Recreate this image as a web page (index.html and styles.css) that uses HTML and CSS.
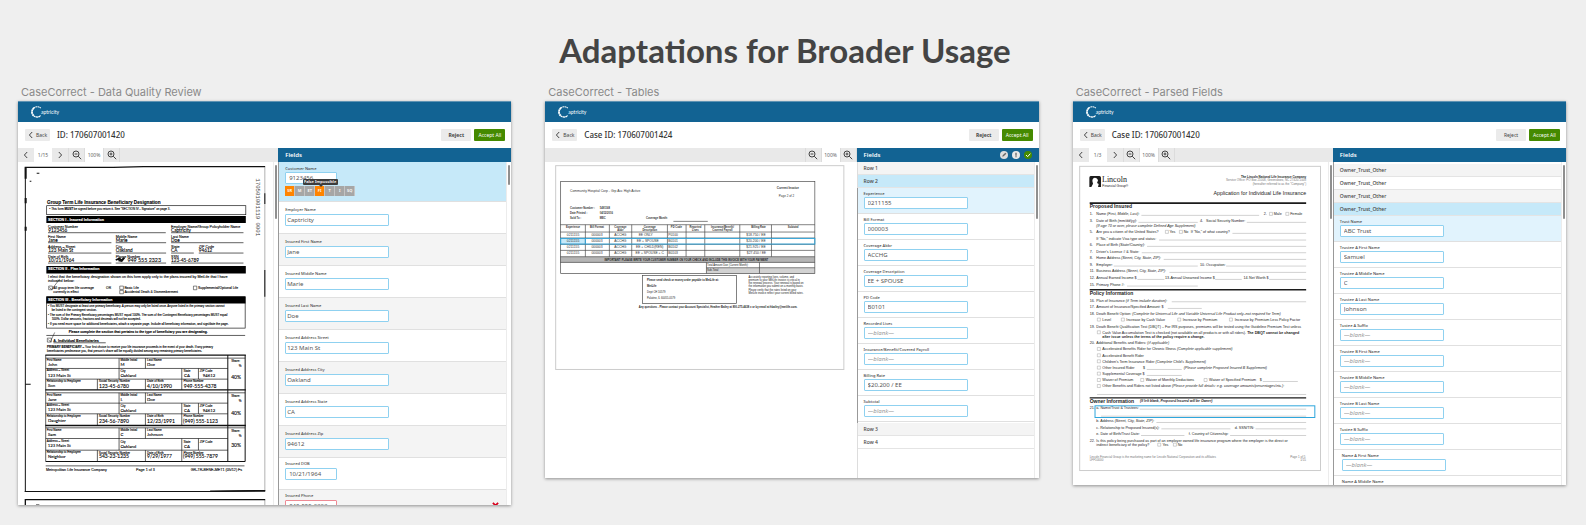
FILE: index.html
```html
<!DOCTYPE html>
<html lang="en">
<head>
<meta charset="utf-8">
<title>Adaptations for Broader Usage</title>
<link rel="stylesheet" href="styles.css">
</head>
<body>
<svg class="sprite" aria-hidden="true">
  <symbol id="chev-left" viewBox="0 0 8 8"><path d="M5.2 1 2.4 4l2.8 3"/></symbol>
  <symbol id="chev-right" viewBox="0 0 8 8"><path d="M2.8 1 5.6 4 2.8 7"/></symbol>
  <symbol id="zoom-out" viewBox="0 0 10 10"><circle cx="4" cy="4" r="3"/><path d="M2.6 4h2.8M6.2 6.2 9.2 9.2"/></symbol>
  <symbol id="zoom-in" viewBox="0 0 10 10"><circle cx="4" cy="4" r="3"/><path d="M2.6 4h2.8M4 2.6v2.8M6.2 6.2 9.2 9.2"/></symbol>
  <symbol id="ring" viewBox="0 0 12 12"><path d="M9.8 2.2A5 5 0 0 0 3.2 1.8" stroke-width="1.1" stroke-dasharray="1.6 .4"/><path d="M3.2 1.8A5 5 0 0 0 3 10" stroke-width="1.8" stroke-dasharray="2 .3"/><path d="M3 10A5 5 0 0 0 9.6 9.6" stroke-width="1.4" stroke-dasharray="1.8 .4"/></symbol>
</svg>
<header class="page-head"><h1>Adaptations for Broader Usage</h1></header>
<main class="boards">

<section class="board">
  <h2 class="caption">CaseCorrect - Data Quality Review</h2>
  <div class="screen screen-review">
    <div class="brand"><svg class="ring"><use href="#ring"/></svg><span>aptricity</span></div>
    <div class="case-bar">
      <button class="btn back"><svg class="chev"><use href="#chev-left"/></svg>Back</button>
      <h3>ID: 170607001420</h3>
      <button class="btn reject strong">Reject</button>
      <button class="btn accept">Accept All</button>
    </div>
    <div class="work">
      <div class="viewer">
        <div class="tools">
          <button class="tool" aria-label="Previous page"><svg class="chev"><use href="#chev-left"/></svg></button>
          <span class="readout">1/15</span>
          <button class="tool" aria-label="Next page"><svg class="chev"><use href="#chev-right"/></svg></button>
          <button class="tool ruled" aria-label="Zoom out"><svg class="lens"><use href="#zoom-out"/></svg></button>
          <span class="readout">100%</span>
          <button class="tool ruled" aria-label="Zoom in"><svg class="lens"><use href="#zoom-in"/></svg></button>
        </div>
        <div class="scroller">
          <svg class="doc scan" viewBox="54 246 765 1029">
            <g class="rule">
              <path stroke-width="4" d="M74 262H340L430 260H795"/>
              <path stroke-width="3" d="M76 262V1234M794 340V372M794 570V650"/>
              <path stroke-width="6" d="M77 264V296M77 354V370M77 440V452"/>
              <path stroke-width="1" d="M794 262V1234"/>
              <path stroke-width="3" d="M74 1234H640L795 1231"/>
              <path stroke-width="5" d="M630 1233 795 1232"/>
              <path stroke-width="4" d="M74 1258H795M76 1258V1275"/>
              <path stroke-width="1" d="M794 1258V1275"/>
              <path stroke-width="3" d="M108 1274h10M76 912h16M110 280h8M89 304h5"/>
              <path stroke-width="2" d="M144 458H497M513 458H730M144 488H334M347 488H498M513 488H730M144 519H334M347 519H498M513 519H581M596 519H730M144 549H334M347 549H498M513 549H730"/>
              <rect x="140" y="377" width="597" height="27" stroke-width="2"/>
              <rect x="140" y="650" width="595" height="94" stroke-width="2"/>
            </g>
            <path d="M139 408h598v21H139zM139 558h598v22H139zM139 649h597v21H139z"/>
            <text class="b s14" x="141" y="371">Group Term Life Insurance Beneficiary Designation</text>
            <text class="s9" x="148" y="390">• This form <tspan class="b">MUST</tspan> be signed before you return it. See "SECTION IV - Signature" on page 3.</text>
            <text class="b s11 w" x="144" y="423">SECTION I - Insured Information</text>
            <text class="s11"><tspan x="144" y="443">Customer Number</tspan><tspan x="144" y="474">First Name</tspan><tspan x="347" y="474">Middle Name</tspan><tspan x="513" y="474">Last Name</tspan><tspan x="144" y="504">Address – Street</tspan><tspan x="347" y="504">City</tspan><tspan x="513" y="504">State</tspan><tspan x="596" y="504">ZIP Code</tspan><tspan x="144" y="534">Date of Birth</tspan><tspan x="347" y="534">Phone Number</tspan><tspan x="513" y="534">SSN</tspan></text>
            <text class="s11" x="513" y="443">Employer Name/Group Policyholder Name</text>
            <text class="hand s14"><tspan x="145" y="456">9123456</tspan><tspan x="513" y="456">Captricity</tspan><tspan x="145" y="486">Jane</tspan><tspan x="347" y="486">Marie</tspan><tspan x="513" y="486">Doe</tspan><tspan x="145" y="517">123 Main St</tspan><tspan x="347" y="517">Oakland</tspan><tspan x="513" y="517">CA</tspan><tspan x="596" y="517">94612</tspan><tspan x="145" y="547">10/21/1964</tspan><tspan x="513" y="547">123-45-6789</tspan></text>
            <text class="hand s16" x="382" y="545">949 555 2323</text>
            <path class="rule" stroke-width="5" d="M347 540l12-5 4 6 10-8-8 10-10-2"/>
            <text class="b s11 w" x="144" y="571">SECTION II - Plan Information</text>
            <text class="s11"><tspan x="144" y="594">I elect that the beneficiary designation shown on this form apply only to the plans insured by MetLife that I have</tspan><tspan x="144" y="607">indicated below:</tspan></text>
            <text class="s10"><tspan x="160" y="627">All group term life coverage</tspan><tspan x="160" y="640">currently in effect</tspan><tspan x="318" y="627">OR</tspan><tspan x="373" y="627">Basic Life</tspan><tspan x="373" y="640">Accidental Death &amp; Dismemberment</tspan><tspan x="594" y="628">Supplemental/Optional Life</tspan></text>
            <g class="rule" stroke-width="1.5"><path d="M146 618h11v11h-11zM359 618h11v10h-11zM359 631h11v10h-11zM580 618h10v11h-10zM142 774h12v12h-12z"/><path d="M148 622l7 6 24-31M145 778l6 7 13-28"/></g>
            <text class="b s11 w" x="144" y="662">SECTION III - Beneficiary Information</text>
            <text class="s9"><tspan x="144" y="682">• You MUST designate at least one primary beneficiary. A person may only be listed once. Anyone listed in the primary section cannot</tspan><tspan x="155" y="694">be listed in the contingent section.</tspan><tspan x="144" y="709">• The sum of the Primary Beneficiary percentages MUST equal 100%. The sum of the Contingent Beneficiary percentages MUST equal</tspan><tspan x="155" y="721">100%. Dollar amounts, fractions and decimals will not be accepted.</tspan><tspan x="144" y="736">• If you need more space for additional beneficiaries, attach a separate page. Include all beneficiary information, and sign/date the page.</tspan></text>
            <text class="b s10" x="206" y="758">Please complete the section that pertains to the type of beneficiary you are designating.</text>
            <path class="rule" stroke-width="2" d="M139 766H735M160 788H317M137 1157H733"/>
            <text class="b s11" x="160" y="785">A. Individual Beneficiaries</text>
            <text class="s9"><tspan class="b" x="141" y="803">PRIMARY BENEFICIARY</tspan> – Your first choice to receive your life insurance proceeds in the event of your death. If any primary<tspan x="141" y="817">beneficiaries predecease you, that person's share will be equally divided among any remaining primary beneficiaries.</tspan></text>
            <g class="rule">
              <path stroke-width="4" d="M136 825H737M136 929H737M136 1036H737"/>
              <path stroke-width="2" d="M137 834H735M137 865H683M137 897H683M137 938H735M137 969H683M137 1001H683M137 1043H735M137 1075H683M137 1110H683M137 825V1144M357 834V897M436 834V865M545 865V929M595 865V897M292 897V929M436 897V929M357 938V1001M436 938V969M545 969V1036M595 969V1001M292 1001V1036M436 1001V1036M357 1043V1110M436 1043V1075M545 1075V1144M595 1075V1110M292 1110V1144M436 1110V1144"/>
              <path stroke-width="3" d="M683 825V1144M735 825V1144M137 1144H735"/>
            </g>
            <text class="s9">
              <tspan x="140" y="844">First Name</tspan><tspan x="361" y="844">Middle Initial</tspan><tspan x="441" y="844">Last Name</tspan><tspan x="693" y="846">Share:</tspan><tspan x="716" y="860">%</tspan><tspan x="140" y="874">Address – Street</tspan><tspan x="361" y="876">City</tspan><tspan x="550" y="876">State</tspan><tspan x="599" y="876">ZIP Code</tspan><tspan x="140" y="906">Relationship to Employee</tspan><tspan x="296" y="907">Social Security Number</tspan><tspan x="441" y="907">Date of Birth</tspan><tspan x="550" y="907">Phone Number</tspan>
              <tspan x="140" y="949">First Name</tspan><tspan x="361" y="949">Middle Initial</tspan><tspan x="441" y="949">Last Name</tspan><tspan x="693" y="951">Share:</tspan><tspan x="716" y="965">%</tspan><tspan x="140" y="979">Address – Street</tspan><tspan x="361" y="980">City</tspan><tspan x="550" y="980">State</tspan><tspan x="599" y="980">ZIP Code</tspan><tspan x="140" y="1011">Relationship to Employee</tspan><tspan x="296" y="1012">Social Security Number</tspan><tspan x="441" y="1012">Date of Birth</tspan><tspan x="550" y="1012">Phone Number</tspan>
              <tspan x="140" y="1054">First Name</tspan><tspan x="361" y="1054">Middle Initial</tspan><tspan x="441" y="1054">Last Name</tspan><tspan x="693" y="1056">Share:</tspan><tspan x="716" y="1070">%</tspan><tspan x="140" y="1085">Address – Street</tspan><tspan x="361" y="1087">City</tspan><tspan x="550" y="1087">State</tspan><tspan x="599" y="1087">ZIP Code</tspan><tspan x="140" y="1119">Relationship to Employee</tspan><tspan x="296" y="1120">Social Security Number</tspan><tspan x="441" y="1120">Date of Birth</tspan><tspan x="550" y="1120">Phone Number</tspan>
            </text>
            <text class="hand s13">
              <tspan x="144" y="858">John</tspan><tspan x="361" y="858">M</tspan><tspan x="441" y="858">Doe</tspan><tspan x="143" y="890">123 Main St</tspan><tspan x="361" y="892">Oakland</tspan><tspan x="552" y="891">CA</tspan><tspan x="608" y="891">94612</tspan><tspan x="144" y="922">Son</tspan>
              <tspan x="144" y="963">Jane</tspan><tspan x="361" y="963">L</tspan><tspan x="441" y="963">Doe</tspan><tspan x="143" y="994">123 Main St</tspan><tspan x="361" y="995">Oakland</tspan><tspan x="552" y="995">CA</tspan><tspan x="608" y="995">94612</tspan><tspan x="144" y="1027">Daughter</tspan>
              <tspan x="144" y="1069">Sam</tspan><tspan x="361" y="1069">C</tspan><tspan x="441" y="1069">Johnson</tspan><tspan x="143" y="1101">123 Main St</tspan><tspan x="361" y="1102">Oakland</tspan><tspan x="552" y="1102">CA</tspan><tspan x="144" y="1134">Neighbor</tspan>
            </text>
            <text class="hand s15">
              <tspan x="297" y="923">123-45-6780</tspan><tspan x="441" y="923">4/10/1990</tspan><tspan x="551" y="923">949-555-4378</tspan><tspan x="693" y="898">40%</tspan>
              <tspan x="297" y="1028">234-56-7890</tspan><tspan x="441" y="1028">12/23/1991</tspan><tspan x="549" y="1028">(949) 555-1123</tspan><tspan x="693" y="1005">40%</tspan>
              <tspan x="297" y="1134">543-23-1235</tspan><tspan x="441" y="1134">9/29/1977</tspan><tspan x="549" y="1134">(949) 555-7879</tspan><tspan x="693" y="1099">30%</tspan>
            </text>
            <text class="s11"><tspan x="138" y="1171">Metropolitan Life Insurance Company</tspan><tspan x="408" y="1171">Page 1 of 3</tspan><tspan x="572" y="1171">GR-TR-BENE-MET1 (05/12) Fs</tspan></text>
            <text class="mono" transform="translate(768 295) rotate(90)">170501001119 0001</text>
          </svg>
          <div class="gutter"><i class="thumb long"></i></div>
        </div>
      </div>
      <div class="panel">
        <div class="panel-head"><h4>Fields</h4></div>
        <div class="scroller">
          <form class="fields edged">
            <div class="field active">
              <label for="a0">Customer Name</label><input id="a0" class="short" value="9123456">
              <div class="flags"><span class="on">SR</span><span>M</span><span>ET</span><span class="on">FI<b class="tip">False Impossible</b></span><span>T</span><span>I</span><span>SQ</span></div>
            </div>
            <div class="field"><label for="a1">Employer Name</label><input id="a1" value="Captricity"></div>
            <div class="field shade"><label for="a2">Insured First Name</label><input id="a2" value="Jane"></div>
            <div class="field"><label for="a3">Insured Middle Name</label><input id="a3" value="Marie"></div>
            <div class="field shade"><label for="a4">Insured Last Name</label><input id="a4" value="Doe"></div>
            <div class="field"><label for="a5">Insured Address Street</label><input id="a5" value="123 Main St"></div>
            <div class="field shade"><label for="a6">Insured Address City</label><input id="a6" value="Oakland"></div>
            <div class="field"><label for="a7">Insured Address State</label><input id="a7" value="CA"></div>
            <div class="field shade"><label for="a8">Insured Address Zip</label><input id="a8" value="94612"></div>
            <div class="field snug"><label for="a9">Insured DOB</label><input id="a9" class="short" value="10/21/1964"></div>
            <div class="field snug shade invalid"><label for="a10">Insured Phone</label><input id="a10" class="short" value="949-555-2323"><svg class="cross" viewBox="0 0 8 8"><path d="M1 1l6 6M7 1 1 7"/></svg></div>
          </form>
          <div class="gutter"><i class="thumb"></i></div>
        </div>
      </div>
    </div>
  </div>
</section>

<section class="board">
  <h2 class="caption">CaseCorrect - Tables</h2>
  <div class="screen screen-tables">
    <div class="brand"><svg class="ring"><use href="#ring"/></svg><span>aptricity</span></div>
    <div class="case-bar">
      <button class="btn back"><svg class="chev"><use href="#chev-left"/></svg>Back</button>
      <h3>Case ID: 170607001424</h3>
      <button class="btn reject strong">Reject</button>
      <button class="btn accept">Accept All</button>
    </div>
    <div class="work">
      <div class="viewer">
        <div class="tools end">
          <button class="tool ruled" aria-label="Zoom out"><svg class="lens"><use href="#zoom-out"/></svg></button>
          <span class="readout">100%</span>
          <button class="tool ruled" aria-label="Zoom in"><svg class="lens"><use href="#zoom-in"/></svg></button>
        </div>
        <svg class="doc" viewBox="18 246 933 948">
          <rect class="sheet" x="50" y="257" width="864" height="611"/>
          <path fill="#b5b5b5" d="M64 530h763v17H64z"/><path fill="#d2d2d2" d="M502 563h325v17H502z"/><path fill="#c6e9f9" d="M64 475h75v17H64z"/>
          <g class="rule grid"><rect x="65" y="304" width="762" height="276"/><path d="M64 434H827M64 456H827M64 474H827M64 493H827M64 511H827M64 530H827M64 547H827M502 563H827M139 434V530M211 434V530M278 434V530M385 434V530M441 434V530M497 434V530M602 434V530M697 434V530M502 547V580M661 547V580M403 424H506"/><rect x="310" y="586" width="282" height="84"/></g>
          <text class="s10 soft" x="93" y="337">Community Hospital Corp - Grp Acc High Active</text>
          <text class="s9 soft"><tspan class="b" x="713" y="327">Current Invoice</tspan><tspan x="719" y="350">Page 2 of 2</tspan></text>
          <text class="s8 b soft"><tspan x="93" y="386">Customer Number :</tspan><tspan x="182" y="386">5491168</tspan><tspan x="93" y="402">Date Printed :</tspan><tspan x="182" y="402">04/12/2016</tspan><tspan x="93" y="418">Sold To :</tspan><tspan x="182" y="418">MEC</tspan><tspan x="321" y="418">Coverage Month:</tspan></text>
          <text class="s8 b soft mid"><tspan x="102" y="443">Experience</tspan><tspan x="174" y="443">Bill Format</tspan><tspan x="244" y="443">Coverage</tspan><tspan x="244" y="452">Abbr</tspan><tspan x="332" y="443">Coverage</tspan><tspan x="332" y="452">Description</tspan><tspan x="412" y="443">PD Code</tspan><tspan x="469" y="443">Reported</tspan><tspan x="469" y="452">Lives</tspan><tspan x="550" y="443">Insurance/Benefit/</tspan><tspan x="550" y="452">Covered Payroll</tspan><tspan x="658" y="443">Billing Rate</tspan><tspan x="762" y="443">Subtotal</tspan></text>
          <text class="s10 soft mid">
            <tspan x="102" y="468">0211155</tspan><tspan x="174" y="468">000003</tspan><tspan x="244" y="468">ACCHG</tspan><tspan x="320" y="468">EE ONLY</tspan><tspan x="402" y="468">P0100</tspan><tspan x="652" y="468">$18.750 / EE</tspan>
            <tspan x="102" y="487">0211155</tspan><tspan x="174" y="487">000003</tspan><tspan x="244" y="487">ACCHG</tspan><tspan x="326" y="487">EE + SPOUSE</tspan><tspan x="402" y="487">B0101</tspan><tspan x="652" y="487">$20.200 / EE</tspan>
            <tspan x="102" y="505">0211155</tspan><tspan x="174" y="505">000003</tspan><tspan x="244" y="505">ACCHG</tspan><tspan x="332" y="505">EE + CHILD(REN)</tspan><tspan x="402" y="505">B0102</tspan><tspan x="652" y="505">$21.925 / EE</tspan>
            <tspan x="102" y="523">0211155</tspan><tspan x="174" y="523">000003</tspan><tspan x="244" y="523">ACCHG</tspan><tspan x="332" y="523">EE + SPOUSE + C</tspan><tspan x="402" y="523">B0103</tspan><tspan x="652" y="523">$27.450 / EE</tspan>
          </text>
          <rect class="pick" x="65" y="475" width="762" height="17"/><path class="pick" d="M139 475v17"/>
          <text class="s8 b mid" x="442" y="542">IMPORTANT! PLEASE WRITE YOUR CUSTOMER NUMBER ON YOUR CHECK AND INCLUDE THIS INVOICE WITH YOUR PAYMENT</text>
          <text class="s8"><tspan x="504" y="557">Total Amount Due (Current Month):</tspan><tspan x="504" y="574">Sub-Total</tspan><tspan class="b" x="324" y="604">Please send check or money order payable to MetLife at:</tspan><tspan class="b" x="324" y="622">MetLife</tspan><tspan x="324" y="640">Dept CH 10579</tspan><tspan x="324" y="656">Palatine, IL 60055-0579</tspan></text>
          <text class="s8"><tspan x="628" y="594">Accurately reporting lives, volume, and</tspan><tspan x="628" y="603">premium to your MetLife invoice is critical in</tspan><tspan x="628" y="613">the renewal process. Your renewal is based on</tspan><tspan x="628" y="622">the information you submit on a monthly basis.</tspan><tspan x="628" y="632">Please verify that the rates listed on your</tspan><tspan x="628" y="641">MetLife invoice reflect your current billed rates.</tspan></text>
          <text class="s8 b" x="299" y="683">Any questions - Please contact your Account Specialist, Heather Bailey at 800-275-4638 x or by email at hbailey@metlife.com.</text>
        </svg>
      </div>
      <div class="panel">
        <div class="panel-head"><h4>Fields</h4>
          <svg class="state" viewBox="0 0 24 24"><circle cx="12" cy="12" r="12" fill="#dcdcdc"/><path d="M7 17l1-4 8-8 3 3-8 8z" fill="#666"/></svg>
          <svg class="state" viewBox="0 0 24 24"><circle cx="12" cy="12" r="12" fill="#e8e8e8"/><path d="M10 5h4v9h-4zM10 16h4v3h-4z" fill="#666"/></svg>
          <svg class="state" viewBox="0 0 24 24"><circle cx="12" cy="12" r="12" fill="#458a00"/><path d="M6 12l5 5 8-9" fill="none" stroke="#fff" stroke-width="3"/></svg>
        </div>
        <div class="scroller">
          <form class="fields compact">
            <div class="group shade">Row 1</div>
            <div class="group active">Row 2</div>
            <div class="nested">
              <div class="field current"><label for="b0">Experience</label><input id="b0" value="0211155"></div>
              <div class="field"><label for="b1">Bill Format</label><input id="b1" value="000003"></div>
              <div class="field"><label for="b2">Coverage Abbr</label><input id="b2" value="ACCHG"></div>
              <div class="field"><label for="b3">Coverage Description</label><input id="b3" value="EE + SPOUSE"></div>
              <div class="field"><label for="b4">PD Code</label><input id="b4" value="B0101"></div>
              <div class="field"><label for="b5">Recorded Lives</label><input id="b5" placeholder="—blank—"></div>
              <div class="field"><label for="b6">Insurance/Benefit/Covered Payroll</label><input id="b6" placeholder="—blank—"></div>
              <div class="field"><label for="b7">Billing Rate</label><input id="b7" value="$20.200 / EE"></div>
              <div class="field"><label for="b8">Subtotal</label><input id="b8" placeholder="—blank—"></div>
            </div>
            <div class="group shade">Row 3</div>
            <div class="group">Row 4</div>
          </form>
          <div class="gutter"><i class="thumb long"></i></div>
        </div>
      </div>
    </div>
  </div>
</section>

<section class="board">
  <h2 class="caption">CaseCorrect - Parsed Fields</h2>
  <div class="screen screen-parsed">
    <div class="brand"><svg class="ring"><use href="#ring"/></svg><span>aptricity</span></div>
    <div class="case-bar">
      <button class="btn back"><svg class="chev"><use href="#chev-left"/></svg>Back</button>
      <h3>Case ID: 170607001420</h3>
      <button class="btn reject">Reject</button>
      <button class="btn accept">Accept All</button>
    </div>
    <div class="work">
      <div class="viewer">
        <div class="tools">
          <button class="tool" aria-label="Previous page"><svg class="chev"><use href="#chev-left"/></svg></button>
          <span class="readout">1/3</span>
          <button class="tool" aria-label="Next page"><svg class="chev"><use href="#chev-right"/></svg></button>
          <button class="tool ruled" aria-label="Zoom out"><svg class="lens"><use href="#zoom-out"/></svg></button>
          <span class="readout">100%</span>
          <button class="tool ruled" aria-label="Zoom in"><svg class="lens"><use href="#zoom-in"/></svg></button>
        </div>
        <div class="scroller">
          <svg class="doc" viewBox="39 246 765 969">
            <rect class="sheet" x="59" y="259" width="722" height="912"/>
            <path d="M92 288h26q5 0 5 5v28h-9l2-9-5-3 3-8q-2-8-9-8-8 1-8 10l2 8-5 10h-6v-28q0-5 4-5z"/>
            <text class="serif" x="126" y="307">Lincoln</text>
            <text class="s10" x="127" y="321">Financial Group®</text>
            <text class="s9 right"><tspan class="b" x="738" y="293">The Lincoln National Life Insurance Company</tspan><tspan class="pale" x="738" y="304">Service Office: PO Box 21008, Greensboro, NC 27420-1008</tspan><tspan class="pale" x="738" y="316">(hereafter referred to as the "Company")</tspan></text>
            <text class="s16 right" x="738" y="345">Application for Individual Life Insurance</text>
            <path d="M89 367h649v5H89zM89 627h649v4H89zM89 951h649v4H89z"/>
            <text class="b s15"><tspan x="89" y="384">Proposed Insured</tspan><tspan x="89" y="644">Policy Information</tspan><tspan x="89" y="968">Owner Information</tspan></text>
            <text class="s10 b i" x="240" y="967">(If left blank, Proposed Insured will be Owner)</text>
            <path class="line" d="M244 406H597M235 427H413M560 427H738M517 460H738M297 480H738M261 499H738M245 518H738M311 538H738M161 558H413M498 558H738M328 577H738M232 598H313M465 598H545M627 598H738M201 618H413M335 665H738M323 685H425M260 868H365M260 886H365M608 904H713M111 943H738M239 987H738M123 1008H738M289 1027H738M304 1046H511M586 1046H738M243 1066H373M510 1066H738"/>
            <text class="s11">
              <tspan x="89" y="406">1.</tspan><tspan x="109" y="406">Name <tspan class="i">(First, Middle, Last)</tspan>:</tspan><tspan x="611" y="406">2.</tspan><tspan x="641" y="406">Male</tspan><tspan x="690" y="406">Female</tspan>
              <tspan x="89" y="427">3.</tspan><tspan x="109" y="427">Date of Birth <tspan class="i">(mm/dd/yy)</tspan>:</tspan><tspan x="420" y="427">4.</tspan><tspan x="438" y="427">Social Security Number:</tspan>
              <tspan class="i" x="109" y="441">(If age 70 or over, please complete Defined Age Supplement)</tspan>
              <tspan x="89" y="460">5.</tspan><tspan x="109" y="460">Are you a citizen of the United States?</tspan><tspan x="328" y="460">Yes</tspan><tspan x="371" y="460">No</tspan><tspan x="392" y="460">If "No," of what country?</tspan>
              <tspan x="109" y="480">If "No," indicate Visa type and status:</tspan>
              <tspan x="89" y="499">6.</tspan><tspan x="109" y="499">Place of Birth <tspan class="i">(State/Country)</tspan>:</tspan>
              <tspan x="89" y="518">7.</tspan><tspan x="109" y="518">Driver's License # &amp; State:</tspan>
              <tspan x="89" y="538">8.</tspan><tspan x="109" y="538">Home Address <tspan class="i">(Street, City, State, ZIP)</tspan>:</tspan>
              <tspan x="89" y="558">9.</tspan><tspan x="109" y="558">Employer:</tspan><tspan x="420" y="558">10.</tspan><tspan x="438" y="558">Occupation:</tspan>
              <tspan x="89" y="577">11.</tspan><tspan x="109" y="577">Business Address <tspan class="i">(Street, City, State, ZIP)</tspan>:</tspan>
              <tspan x="89" y="597">12.</tspan><tspan x="109" y="597">Annual Earned Income $</tspan><tspan x="315" y="597">13.</tspan><tspan x="331" y="597">Annual Unearned Income $</tspan><tspan x="550" y="597">14.</tspan><tspan x="567" y="597">Net Worth $</tspan>
              <tspan x="89" y="617">15.</tspan><tspan x="109" y="617">Primary Phone #:</tspan>
              <tspan x="89" y="665">16.</tspan><tspan x="109" y="665">Plan of Insurance <tspan class="i">(if Term include duration)</tspan>:</tspan>
              <tspan x="89" y="685">17.</tspan><tspan x="109" y="685">Amount of Insurance/Specified Amount:  $</tspan>
              <tspan x="89" y="706">18.</tspan><tspan x="109" y="706">Death Benefit Option: <tspan class="i">(Complete for Universal Life and Variable Universal Life Product only–not required for Term)</tspan></tspan>
              <tspan x="127" y="723">Level</tspan><tspan x="199" y="723">Increase by Cash Value</tspan><tspan x="368" y="723">Increase by Premium</tspan><tspan x="524" y="723">Increase by Premium Less Policy Factor</tspan>
              <tspan x="89" y="744">19.</tspan><tspan x="109" y="744">Death Benefit Qualification Test (DBQT) – For IRS purposes, premiums will be tested using the Guideline Premium Test unless</tspan>
              <tspan x="89" y="793">20.</tspan><tspan x="109" y="793">Additional Benefits and Riders: <tspan class="i">(if applicable)</tspan></tspan>
              <tspan x="127" y="811">Accelerated Benefits Rider for Chronic Illness <tspan class="i">(Complete applicable supplement)</tspan></tspan>
              <tspan x="127" y="830">Accelerated Benefit Rider</tspan>
              <tspan x="127" y="848">Children's Term Insurance Rider <tspan class="i">(Complete Child's Supplement)</tspan></tspan>
              <tspan x="127" y="867">Other Insured Rider</tspan><tspan x="249" y="867">$</tspan><tspan class="i" x="371" y="867">(Please complete Proposed Insured B Supplement)</tspan>
              <tspan x="127" y="885">Supplemental Coverage $</tspan>
              <tspan x="127" y="904">Waiver of Premium</tspan><tspan x="257" y="904">Waiver of Monthly Deductions</tspan><tspan x="447" y="904">Waiver of Specified Premium</tspan><tspan x="599" y="904">$</tspan>
              <tspan x="127" y="922">Other Benefits and Riders not listed above <tspan class="i">(Please provide full details: e.g. coverage amounts/percentages/etc.)</tspan>:</tspan>
              <tspan x="89" y="987">21.</tspan><tspan x="109" y="987">a. Name/Trust &amp; Trustees:</tspan>
              <tspan x="109" y="1027">b. Address <tspan class="i">(Street, City, State, ZIP)</tspan>:</tspan>
              <tspan x="109" y="1046">c. Relationship to Proposed Insured(s):</tspan><tspan x="524" y="1046">d. SSN/TIN:</tspan>
              <tspan x="109" y="1066">e. Date of Birth/Trust Date:</tspan><tspan x="386" y="1066">f. Country of Citizenship:</tspan>
              <tspan x="89" y="1085">22.</tspan><tspan x="109" y="1085">Is this policy being purchased as part of an employer owned life insurance program where the employer is the direct or</tspan>
              <tspan x="109" y="1098">indirect beneficiary of the policy?</tspan><tspan x="307" y="1098">Yes</tspan><tspan x="353" y="1098">No</tspan>
            </text>
            <text class="s11"><tspan x="127" y="761">Cash Value Accumulation Test is checked (not available on all products or with all riders).</tspan> <tspan class="b">The DBQT cannot be changed</tspan><tspan class="b" x="127" y="775">after issue unless the terms of the policy require a change.</tspan></text>
            <path class="ticks" d="M628 397h9v9h-9zM677 397h9v9h-9zM316 451h9v9h-9zM358 451h9v9h-9zM112 714h9v9h-9zM184 714h9v9h-9zM353 714h9v9h-9zM508 714h9v9h-9zM112 752h9v9h-9zM112 802h9v9h-9zM112 821h9v9h-9zM112 839h9v9h-9zM112 858h9v9h-9zM112 876h9v9h-9zM112 895h9v9h-9zM242 895h9v9h-9zM432 895h9v9h-9zM112 913h9v9h-9zM293 1089h9v9h-9zM340 1089h9v9h-9z"/>
            <rect class="pick" x="105" y="977" width="659" height="35"/>
            <text class="s9 pale"><tspan x="89" y="1133">Lincoln Financial Group is the marketing name for Lincoln National Corporation and its affiliates</tspan><tspan x="89" y="1143">LFF10000</tspan><tspan x="690" y="1133">Page 1 of 5</tspan><tspan x="720" y="1143">1/15</tspan></text>
          </svg>
          <div class="gutter"><i class="thumb long"></i></div>
        </div>
      </div>
      <div class="panel">
        <div class="panel-head"><h4>Fields</h4></div>
        <div class="scroller">
          <form class="fields compact edged lowered">
            <div class="group shade">Owner_Trust_Other</div>
            <div class="group">Owner_Trust_Other</div>
            <div class="group shade">Owner_Trust_Other</div>
            <div class="group active">Owner_Trust_Other</div>
            <div class="field current"><label for="c0">Trust Name</label><input id="c0" value="ABC Trust"></div>
            <div class="field"><label for="c1">Trustee A First Name</label><input id="c1" value="Samuel"></div>
            <div class="field"><label for="c2">Trustee A Middle Name</label><input id="c2" value="C"></div>
            <div class="field"><label for="c3">Trustee A Last Name</label><input id="c3" value="Johnson"></div>
            <div class="field"><label for="c4">Tustee A Suffix</label><input id="c4" placeholder="—blank—"></div>
            <div class="field"><label for="c5">Trustee B First Name</label><input id="c5" placeholder="—blank—"></div>
            <div class="field"><label for="c6">Trustee B Middle Name</label><input id="c6" placeholder="—blank—"></div>
            <div class="field"><label for="c7">Trustee B Last Name</label><input id="c7" placeholder="—blank—"></div>
            <div class="field"><label for="c8">Tustee B Suffix</label><input id="c8" placeholder="—blank—"></div>
            <div class="field inset"><label for="c9">Name A First Name</label><input id="c9" placeholder="—blank—"></div>
            <div class="field inset"><label for="c10">Name A Middle Name</label><input id="c10" placeholder="—blank—"></div>
          </form>
          <div class="gutter"><i class="thumb long"></i></div>
        </div>
      </div>
    </div>
  </div>
</section>
</main>
</body>
</html>
```
FILE: styles.css
```css
* { box-sizing: border-box; }
body { margin: 0; background: #efefef; color: #444; font-family: "Noto Sans", "Open Sans", sans-serif; }
h1, h2, h3, h4 { margin: 0; }
button, input { font: inherit; color: inherit; margin: 0; }
.sprite { display: none; }

.page-head { padding: 26px 16px 0 0; text-align: center; }
h1 { font-family: Lato, "Noto Sans", sans-serif; font-size: 33px; line-height: 48px; font-weight: 700; color: #444; }

.boards { display: grid; grid-template-columns: repeat(3, minmax(0, 1fr)); gap: 34px; align-items: start; padding: 10px 20px 20px 18px; }
.caption { font: 400 11px/16px Inter, sans-serif; color: #8a8a8a; padding-left: 3px; margin-bottom: 1px; white-space: nowrap; }

.screen { display: flex; flex-direction: column; overflow: hidden; background: #fff; box-shadow: 0 1px 3px rgba(0, 0, 0, .4); }
.screen-review { aspect-ratio: 493 / 404; }
.screen-tables { aspect-ratio: 493 / 377; }
.screen-parsed { aspect-ratio: 493 / 384; }

.brand { flex: none; display: flex; align-items: center; height: 21px; padding-left: 13px; background: #126393; border-top: 1px solid #5f93b3; color: #fff; font: 400 5px/6px Lato, sans-serif; }
.ring { width: 12px; height: 12px; fill: none; stroke: #fff; }
.brand span { margin-left: -2px; }

.case-bar { flex: none; display: flex; align-items: center; height: 26px; padding: 0 6px 0 7px; }
.case-bar h3 { flex: 1; padding-left: 7px; font-size: 8px; line-height: 12px; font-weight: 500; color: #333; }
.btn { height: 12px; padding: 0; border: 0; border-radius: 1px; font-size: 5px; line-height: 12px; text-align: center; }
.back { width: 25px; background: #ebebeb; display: flex; align-items: center; gap: 1px; padding-left: 2px; }
.reject { width: 30px; background: #ebebeb; margin-right: 3px; }
.strong { font-weight: 700; }
.accept { width: 31px; background: #458a00; color: #fff; }
.chev { width: 8px; height: 8px; fill: none; stroke: #444; stroke-width: 1; }
.lens { width: 10px; height: 10px; fill: none; stroke: #444; stroke-width: 1; }

.work { flex: 1; min-height: 0; display: grid; grid-template-columns: minmax(0, 260fr) minmax(0, 233fr); grid-template-rows: minmax(0, 1fr); }
.screen-tables .work { grid-template-columns: minmax(0, 311fr) minmax(0, 182fr); }
.viewer, .panel { display: flex; flex-direction: column; min-height: 0; overflow: hidden; }

.tools { flex: none; display: flex; height: 14px; background: #e9e9e9; }
.tools.end { justify-content: flex-end; }
.tool { width: 16px; padding: 0; border: 0; background: none; display: grid; place-items: center; }
.ruled { width: 17px; border: solid #dcdcdc; border-width: 0 1px; }
.readout { width: 18px; background: #fff; font-size: 5px; line-height: 15px; text-align: center; color: #666; }

.scroller { flex: 1; min-height: 0; display: grid; grid-template-columns: minmax(0, 1fr) 5px; overflow: hidden; }
.gutter { border-left: 1px solid #ececec; padding: 3px 1px; background: #fff; }
.thumb { display: block; width: 2px; height: 20px; border-radius: 1px; background: #8f8f8f; }
.thumb.long { height: 54px; }

.panel-head { flex: none; display: flex; align-items: center; gap: 4px; height: 14px; padding: 0 7px; background: #126393; color: #fff; }
.panel-head h4 { flex: 1; font-size: 6px; line-height: 14px; font-weight: 600; }
.state { width: 8px; height: 8px; }

.fields { border-left: 1px solid #ddd; }
.fields.edged { border-left-color: #999; }
.fields.lowered { padding-top: 2px; }
.nested { margin-left: -1px; padding-bottom: 1px; border-left: 1px solid #999; }
.group { height: 13px; padding-left: 6px; border-bottom: 1px solid #e4e4e4; font-size: 5px; line-height: 13px; font-weight: 500; }
.field { position: relative; height: 32px; padding: 4px 6px 0; border-bottom: 1px solid #e0e0e0; }
.field label { display: block; font-size: 4px; line-height: 7px; font-weight: 500; }
.field input { display: block; width: 104px; height: 12px; margin-top: 1px; padding: 0 1px; border: 1px solid #8fd1f0; border-radius: 1px; background: #fff; font-size: 6px; line-height: 10px; color: #555; outline: 0; }
.field input.short { width: 52px; padding-left: 3px; }
.field input::placeholder { color: #999; font-style: italic; opacity: 1; }
.snug { padding-top: 2px; }
.shade { background: #f4f4f4; }
.active { background: #c6e9f9; }
.field.active { height: 40px; padding-top: 3px; }
.field.active input { margin-top: 0; }
.current { background: #e1f3fd; }
.compact .field { height: 26px; padding-top: 2px; }
.compact .field input { margin-top: 0; padding-left: 3px; }
.compact .inset { padding-left: 8px; }
.invalid input { border-color: #ee8a94; }
.cross { position: absolute; right: 7px; top: 12px; width: 7px; height: 7px; stroke: #d8001c; stroke-width: 2; }

.flags { display: flex; width: 70px; margin-top: 2px; }
.flags span { position: relative; flex: 1; height: 10px; border-right: 1px solid #c4c4c4; background: #a6a6a6; color: #fff; font-size: 4px; line-height: 10px; font-weight: 600; text-align: center; }
.flags .on { background: #ff8400; }
.tip { position: absolute; left: 50%; bottom: 11px; width: 35px; height: 6px; margin-left: -17px; border-radius: 1px; background: #3d3d3d; color: #fff; font-size: 4px; line-height: 6px; font-weight: 600; white-space: nowrap; }
.tip::after { content: ""; position: absolute; left: 16px; top: 6px; border: 2px solid transparent; border-top-color: #3d3d3d; }

/* Documents: three drawing units make one pixel. */
.doc { display: block; width: 100%; height: auto; fill: #1c1c1c; font-family: "Liberation Sans", Arial, sans-serif; }
.scan { fill: #000; }
.scan text { stroke: #000; stroke-width: .3px; }
.scan .w { fill: #fff; stroke: #fff; }
.rule { fill: none; stroke: #111; }
.grid { stroke: #444; stroke-width: 2; }
.sheet { fill: #fff; stroke: #ccc; stroke-width: 3; }
.line, .ticks { fill: none; stroke: #777; stroke-width: 1; }
.pick { fill: none; stroke: #2fa6dc; stroke-width: 3; }
.s8 { font-size: 8px; }
.s9 { font-size: 9px; }
.s10 { font-size: 10px; }
.s11 { font-size: 11px; }
.s13 { font-size: 13px; }
.s14 { font-size: 14px; }
.s15 { font-size: 15px; }
.s16 { font-size: 16px; }
.b { font-weight: 700; }
.i { font-style: italic; }
.soft { fill: #333; }
.pale { fill: #777; }
.mid { text-anchor: middle; }
.right { text-anchor: end; }
.hand { font-family: Lato, sans-serif; }
.serif { font-family: "Liberation Serif", serif; font-size: 24px; }
.scan .mono { font-family: "Liberation Mono", monospace; font-size: 17px; fill: #444; stroke: none; }
```
